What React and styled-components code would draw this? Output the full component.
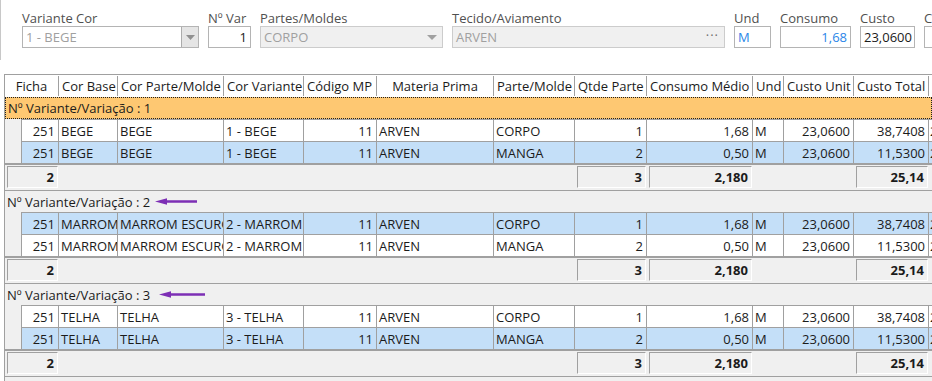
import styled, { createGlobalStyle } from "styled-components";

const GlobalStyle = createGlobalStyle`
  * { box-sizing: border-box; }
  html, body { margin: 0; padding: 0; background: #fff; }
  body {
    width: 932px;
    height: 381px;
    overflow: hidden;
    font-family: "Open Sans", "Noto Sans", sans-serif;
    font-size: 13px;
    color: #1b1b1b;
  }
`;

const COLS = "17px 37px 59px 106px 80px 73px 117px 81px 72px 106px 31px 70px 75px 80px";

const Page = styled.div`
  width: 932px;
  height: 381px;
  overflow: hidden;
`;

const FormPanel = styled.div`
  display: flex;
  gap: 9px;
  height: 60px;
  padding: 11px 0 0 21px;
  border-left: 1px solid #c8c8c8;
  white-space: nowrap;
`;

const Field = styled.div`
  display: flex;
  flex-direction: column;
  flex: 0 0 ${(p) => p.$w}px;
  width: ${(p) => p.$w}px;
`;

const Label = styled.label`
  height: 15px;
  line-height: 15px;
  color: #505050;
  font-size: 13px;
`;

const Input = styled.div`
  position: relative;
  height: 22px;
  line-height: 20px;
  padding: 0 3px;
  border: 1px solid ${(p) => (p.$disabled ? "#cccccc" : "#b4b4b4")};
  background: ${(p) => (p.$disabled ? "#f0f0f0" : "#fff")};
  color: ${(p) => p.$color || "#1b1b1b"};
  text-align: ${(p) => p.$align || "left"};
  overflow: hidden;
`;

const DropButton = styled.span`
  position: absolute;
  top: 0;
  right: 0;
  width: 17px;
  height: 20px;
  background: #e5e5e5;
  border-left: 1px solid #acacac;
  display: flex;
  align-items: center;
  justify-content: center;
`;

const Caret = styled.span`
  position: absolute;
  top: 8px;
  right: ${(p) => p.$right}px;
  width: 0;
  height: 0;
  border-left: 5px solid transparent;
  border-right: 5px solid transparent;
  border-top: 5px solid #a0a0a0;
`;

const Ellipsis = styled.span`
  position: absolute;
  right: 5px;
  top: -2px;
  color: #707070;
  letter-spacing: 1px;
`;

const Grid = styled.div`
  margin: 14px 0 0 4px;
  width: 1010px;
  border-left: 1px solid #a0a0a0;
  border-top: 1px solid #a0a0a0;
`;

const HeaderRow = styled.div`
  display: grid;
  grid-template-columns: ${COLS};
  height: 22px;
  background: #fff;
`;

const HeaderCell = styled.div`
  grid-column: ${(p) => p.$span || "auto"};
  border-right: 1px solid #a0a0a0;
  margin: 1px 0;
  padding: 0 3px;
  line-height: 20px;
  text-align: ${(p) => p.$align || "left"};
  white-space: nowrap;
  overflow: hidden;
`;

const GroupHeader = styled.div`
  display: flex;
  align-items: center;
  height: 22px;
  padding-left: 2px;
  background: ${(p) => (p.$active ? "#fec872" : "#f0f0f0")};
  border: ${(p) => (p.$active ? "1px dotted #202020" : "none")};
  border-top: 1px ${(p) => (p.$active ? "dotted #202020" : "solid #a0a0a0")};
  width: 927px;
  white-space: nowrap;
`;

const Arrow = styled.svg`
  margin-left: ${(p) => p.$gap}px;
  flex: none;
`;

const DataRow = styled.div`
  display: grid;
  grid-template-columns: ${COLS};
  height: 22px;
  background: ${(p) => (p.$selected ? "#c4dff8" : "#fff")};
`;

const Indent = styled.div`
  background: #f0f0f0;
  border-right: 1px solid #a0a0a0;
`;

const Cell = styled.div`
  border-top: 1px solid #a0a0a0;
  border-right: 1px solid #a0a0a0;
  padding: ${(p) => (p.$tight ? "0 0 0 1px" : "0 3px 0 2px")};
  line-height: 22px;
  text-align: ${(p) => p.$align || "left"};
  white-space: nowrap;
  overflow: hidden;
`;

const Footer = styled.div`
  display: grid;
  grid-template-columns: ${COLS};
  height: 27px;
  padding-top: 1px;
  border-top: 2px solid #a0a0a0;
  background: #f0f0f0;
`;

const SumBox = styled.div`
  grid-column: ${(p) => p.$col};
  height: 22px;
  margin: 0 1px 0 2px;
  padding-right: 3px;
  border: 1px solid;
  border-color: #a0a0a0 #fff #fff #a0a0a0;
  line-height: 20px;
  text-align: right;
  font-weight: 700;
`;

const Tail = styled.div`
  height: 10px;
  border-top: 1px solid #a0a0a0;
  background: #f0f0f0;
`;

const columns = [
  { t: "Ficha", span: "span 2", align: "center" },
  { t: "Cor Base" },
  { t: "Cor Parte/Molde" },
  { t: "Cor Variante" },
  { t: "Código MP" },
  { t: "Materia Prima", align: "center" },
  { t: "Parte/Molde" },
  { t: "Qtde Parte" },
  { t: "Consumo Médio" },
  { t: "Und" },
  { t: "Custo Unit" },
  { t: "Custo Total" },
  { t: "Custo Médio" },
];

const rowA = (base, parte, variante, sel) => ({
  base, parte, variante, sel, part: "CORPO", qtd: "1", cons: "1,68", total: "38,7408",
});
const rowB = (base, parte, variante, sel) => ({
  base, parte, variante, sel, part: "MANGA", qtd: "2", cons: "0,50", total: "11,5300",
});

const groups = [
  {
    n: 1,
    active: true,
    rows: [rowA("BEGE", "BEGE", "1 - BEGE", false), rowB("BEGE", "BEGE", "1 - BEGE", true)],
  },
  {
    n: 2,
    arrow: { gap: 5, w: 42 },
    rows: [
      rowA("MARROM", "MARROM ESCURO", "2 - MARROM ESCURO", true),
      rowB("MARROM", "MARROM ESCURO", "2 - MARROM ESCURO", false),
    ],
  },
  {
    n: 3,
    arrow: { gap: 9, w: 46 },
    rows: [rowA("TELHA", "TELHA", "3 - TELHA", false), rowB("TELHA", "TELHA", "3 - TELHA", true)],
  },
];

const PointerArrow = ({ gap, w }) => (
  <Arrow $gap={gap} width={w} height="9" viewBox={`0 0 ${w} 9`}>
    <line x1="8" y1="4.5" x2={w} y2="4.5" stroke="#7d2fb5" strokeWidth="2.4" />
    <polygon points="0,4.5 12,1.2 12,7.8" fill="#7d2fb5" />
  </Arrow>
);

const Group = ({ g }) => (
  <>
    <GroupHeader $active={g.active}>
      Nº Variante/Variação : {g.n}
      {g.arrow && <PointerArrow gap={g.arrow.gap} w={g.arrow.w} />}
    </GroupHeader>
    {g.rows.map((r, i) => (
      <DataRow key={i} $selected={r.sel}>
        <Indent />
        <Cell $align="right">251</Cell>
        <Cell>{r.base}</Cell>
        <Cell>{r.parte}</Cell>
        <Cell>{r.variante}</Cell>
        <Cell $align="right">11</Cell>
        <Cell>ARVEN</Cell>
        <Cell>{r.part}</Cell>
        <Cell $align="right">{r.qtd}</Cell>
        <Cell $align="right">{r.cons}</Cell>
        <Cell>M</Cell>
        <Cell $align="right">23,0600</Cell>
        <Cell $align="right">{r.total}</Cell>
        <Cell $tight>23,0600</Cell>
      </DataRow>
    ))}
    <Footer>
      <SumBox $col="1 / 3">2</SumBox>
      <SumBox $col="9">3</SumBox>
      <SumBox $col="10">2,180</SumBox>
      <SumBox $col="13">25,14</SumBox>
    </Footer>
  </>
);

export default function App() {
  return (
    <Page>
      <GlobalStyle />
      <FormPanel>
        <Field $w={177}>
          <Label>Variante Cor</Label>
          <Input $color="#a0a0a0">
            1 - BEGE
            <DropButton>
              <svg width="9" height="5" viewBox="0 0 9 5">
                <polygon points="0,0 9,0 4.5,5" fill="#909090" />
              </svg>
            </DropButton>
          </Input>
        </Field>
        <Field $w={43}>
          <Label>Nº Var</Label>
          <Input $align="right">1</Input>
        </Field>
        <Field $w={183}>
          <Label>Partes/Moldes</Label>
          <Input $disabled $color="#a0a0a0">
            CORPO
            <Caret $right={5} />
          </Input>
        </Field>
        <Field $w={273}>
          <Label>Tecido/Aviamento</Label>
          <Input $disabled $color="#a0a0a0">
            ARVEN
            <Ellipsis>···</Ellipsis>
          </Input>
        </Field>
        <Field $w={37}>
          <Label>Und</Label>
          <Input $color="#2a86e8">M</Input>
        </Field>
        <Field $w={71}>
          <Label>Consumo</Label>
          <Input $color="#2a86e8" $align="right">1,68</Input>
        </Field>
        <Field $w={55}>
          <Label>Custo</Label>
          <Input $align="right">23,0600</Input>
        </Field>
        <Field $w={70}>
          <Label>Custo Total</Label>
          <Input $align="right">38,7408</Input>
        </Field>
      </FormPanel>
      <Grid>
        <HeaderRow>
          {columns.map((c) => (
            <HeaderCell key={c.t} $span={c.span} $align={c.align}>
              {c.t}
            </HeaderCell>
          ))}
        </HeaderRow>
        {groups.map((g) => (
          <Group key={g.n} g={g} />
        ))}
        <Tail />
      </Grid>
    </Page>
  );
}
